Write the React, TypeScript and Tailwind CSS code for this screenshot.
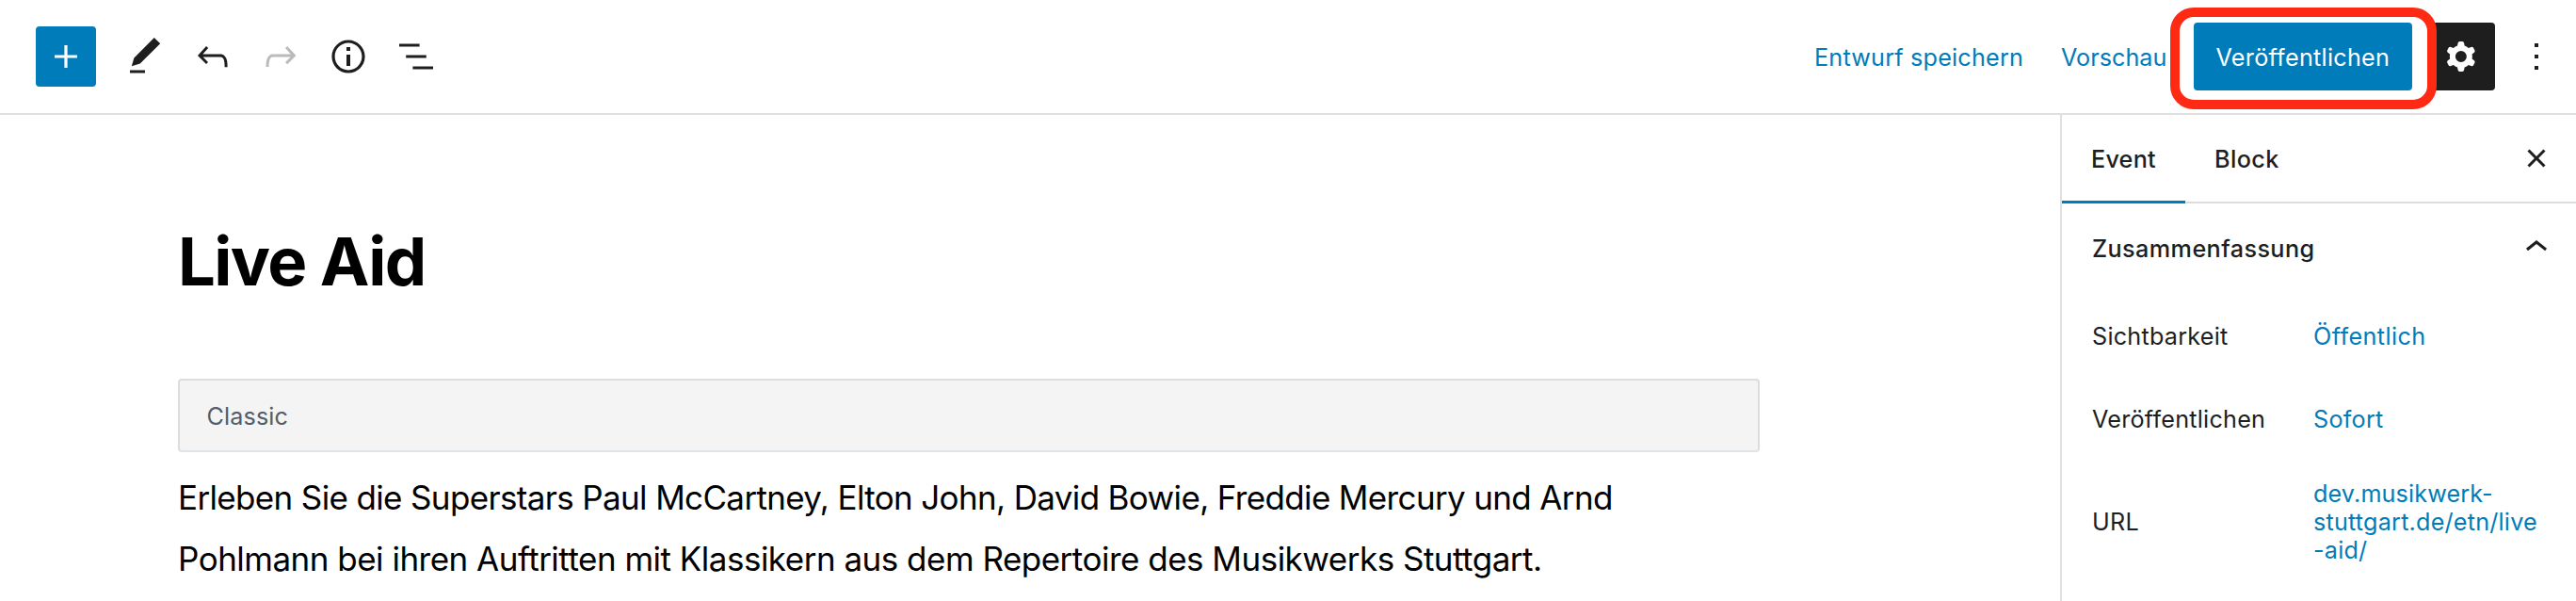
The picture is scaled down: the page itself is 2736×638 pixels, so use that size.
import type { ReactNode } from "react";

function Icon({ d, className = "", evenOdd = false }: { d: string; className?: string; evenOdd?: boolean }) {
  return (
    <svg viewBox="0 0 24 24" className={`size-12 shrink-0 fill-current ${className}`} aria-hidden="true">
      <path d={d} fillRule={evenOdd ? "evenodd" : "nonzero"} clipRule={evenOdd ? "evenodd" : "nonzero"} />
    </svg>
  );
}

const icons = {
  plus: "M18 11.2h-5.2V6h-1.6v5.2H6v1.6h5.2V18h1.6v-5.2H18z",
  edit: "M20.1 5.1L16.9 2 6.2 12.7l-1.3 4.4 4.5-1.3L20.1 5.1zM4 20.8h8v-1.5H4v1.5z",
  undo: "M18.3 11.7c-.6-.6-1.4-.9-2.3-.9H6.7l2.9-3.3-1.1-1-4.5 5L8.5 16l1-1-2.7-2.7H16c.5 0 .9.2 1.3.5 1 1 1 3.4 1 4.5v.3h1.5v-.2c0-1.5 0-4.3-1.5-5.7z",
  redo: "M15.6 6.5l-1.1 1 2.9 3.3H8c-.9 0-1.7.3-2.3.9-1.4 1.5-1.4 4.2-1.4 5.6v.2h1.5v-.3c0-1.1 0-3.5 1-4.5.3-.3.7-.5 1.3-.5h9.2L14.5 15l1.1 1.1 4.6-4.6-4.6-5z",
  info: "M12 3.2c-4.8 0-8.8 3.9-8.8 8.8 0 4.8 3.9 8.8 8.8 8.8 4.8 0 8.8-3.9 8.8-8.8 0-4.8-4-8.8-8.8-8.8zm0 16c-4 0-7.2-3.3-7.2-7.2C4.8 8 8 4.8 12 4.8s7.2 3.3 7.2 7.2c0 4-3.2 7.2-7.2 7.2zM11 17h2v-6h-2v6zm0-8h2V7h-2v2z",
  list: "M13.8 5.2H3v1.5h10.8V5.2zm-3.6 12v1.5H21v-1.5H10.2zm7.2-6H6.6v1.5h10.8v-1.5z",
  cog: "M10.289 4.836A1 1 0 0111.275 4h1.306a1 1 0 01.987.836l.244 1.466c.787.26 1.503.679 2.108 1.218l1.393-.522a1 1 0 011.216.437l.653 1.13a1 1 0 01-.23 1.273l-1.148.944a6.025 6.025 0 010 2.435l1.149.946a1 1 0 01.23 1.272l-.653 1.13a1 1 0 01-1.216.437l-1.394-.522c-.605.54-1.32.958-2.108 1.218l-.244 1.466a1 1 0 01-.987.836h-1.306a1 1 0 01-.986-.836l-.244-1.466a5.995 5.995 0 01-2.108-1.218l-1.394.522a1 1 0 01-1.217-.436l-.653-1.131a1 1 0 01.23-1.272l1.149-.946a6.026 6.026 0 010-2.435l-1.148-.944a1 1 0 01-.23-1.272l.653-1.131a1 1 0 011.217-.437l1.393.522a5.994 5.994 0 012.108-1.218l.244-1.466zM14.929 12a3 3 0 11-6 0 3 3 0 016 0z",
  more: "M13 19h-2v-2h2v2zm0-6h-2v-2h2v2zm0-6h-2V5h2v2z",
  close: "M12 13.06l3.712 3.713 1.061-1.06L13.061 12l3.712-3.712-1.06-1.06L12 10.938 8.288 7.227l-1.061 1.06L10.939 12l-3.712 3.712 1.06 1.061L12 13.061z",
  chevronUp: "M6.5 12.4L12 8l5.5 4.4-.9 1.2L12 10l-4.5 3.6-1-1.2z",
};

function Header() {
  return (
    <header className="flex h-[122px] shrink-0 items-center border-b-2 border-[#e0e0e0] pr-[18px] pl-[38px]">
      <button className="flex size-16 items-center justify-center rounded-[4px] bg-[#007cba] text-white">
        <Icon d={icons.plus} />
      </button>
      <div className="ml-7 flex gap-6">
        <Icon d={icons.edit} />
        <Icon d={icons.undo} />
        <Icon d={icons.redo} className="text-[#bbb]" />
        <Icon d={icons.info} />
        <Icon d={icons.list} />
      </div>
      <div className="ml-auto flex items-center text-[#007cba]">
        <a className="w-[262px] pt-[2px] tracking-[0.2px]">Entwurf speichern</a>
        <a className="w-[141px] pt-[2px] tracking-[0.014px]">Vorschau</a>
        <div className="relative">
          <button className="flex h-[72px] w-[232px] items-center rounded-[4px] bg-[#007cba] pt-[2px] pl-[23.5px] tracking-[0.261px] text-white">
            Veröffentlichen
          </button>
          <div className="absolute -top-4 -left-[25px] z-10 h-[108px] w-[283px] rounded-[25px] border-[10px] border-[#ff2a14]" />
        </div>
        <button className="ml-4 flex size-[72px] items-center justify-center rounded-[4px] bg-[#1e1e1e] text-white">
          <Icon d={icons.cog} evenOdd />
        </button>
        <Icon d={icons.more} className="ml-5 text-[#1e1e1e]" />
      </div>
    </header>
  );
}

function Editor() {
  return (
    <main className="w-[2188px] shrink-0 pt-[113px] pl-[189px] text-black">
      <h1 className="text-[70.6px] leading-[85px] font-bold tracking-[-1.6px]">Live Aid</h1>
      <div className="mt-[82px] h-[78px] w-[1680px] rounded-[4px] border-2 border-[#ddd] border-b-[#dfe4e9] bg-[#f4f4f4] pt-[23px] pl-[28.5px] tracking-[0.111px] text-[#555d66]">
        Classic
      </div>
      <p className="mt-4 text-[35px] leading-[65px] whitespace-nowrap">
        <span className="tracking-[-0.645px]">
          Erleben Sie die Superstars Paul McCartney, Elton John, David Bowie, Freddie Mercury und Arnd
        </span>
        <br />
        <span className="tracking-[-0.505px]">
          Pohlmann bei ihren Auftritten mit Klassikern aus dem Repertoire des Musikwerks Stuttgart.
        </span>
      </p>
    </main>
  );
}

function Row({ label, className, children }: { label: string; className: string; children: ReactNode }) {
  return (
    <div className={`flex items-center ${className}`}>
      <span className="w-[235px] shrink-0 tracking-[0.23px]">{label}</span>
      <span className="text-[#007cba]">{children}</span>
    </div>
  );
}

function Sidebar() {
  return (
    <aside className="flex grow flex-col border-l-2 border-[#e0e0e0]">
      <div className="flex h-[94px] shrink-0 font-medium shadow-[inset_0_-2px_0_#ddd]">
        <div className="w-[131px] pt-8 pl-[31px] tracking-[0.217px] shadow-[inset_0_-3px_0_#007cba]">Event</div>
        <div className="pt-8 pl-[31px] tracking-[0.4px]">Block</div>
        <Icon d={icons.close} className="mt-[22px] mr-[18px] ml-auto" />
      </div>
      <div className="flex pr-[18px] pl-8 font-medium">
        <h2 className="pt-[33px] tracking-[0.414px]">Zusammenfassung</h2>
        <Icon d={icons.chevronUp} className="mt-[23px] ml-auto" />
      </div>
      <div className="flex flex-col pt-[55px] pl-8">
        <Row label="Sichtbarkeit" className="h-[30px]">
          <span className="tracking-[0.4px]">Öffentlich</span>
        </Row>
        <Row label="Veröffentlichen" className="mt-[58px] h-[30px]">
          <span className="tracking-[0.235px]">Sofort</span>
        </Row>
        <Row label="URL" className="mt-[49px]">
          <span className="block tracking-[0.116px]">dev.musikwerk-</span>
          <span className="block tracking-[0.203px]">stuttgart.de/etn/live</span>
          <span className="block tracking-[0.203px]">-aid/</span>
        </Row>
      </div>
    </aside>
  );
}

export default function App() {
  return (
    <div className="flex h-[638px] w-[2736px] flex-col overflow-hidden bg-white font-['Inter',sans-serif] text-[25.2px] leading-[30px] text-[#1e1e1e]">
      <Header />
      <div className="flex grow">
        <Editor />
        <Sidebar />
      </div>
    </div>
  );
}
